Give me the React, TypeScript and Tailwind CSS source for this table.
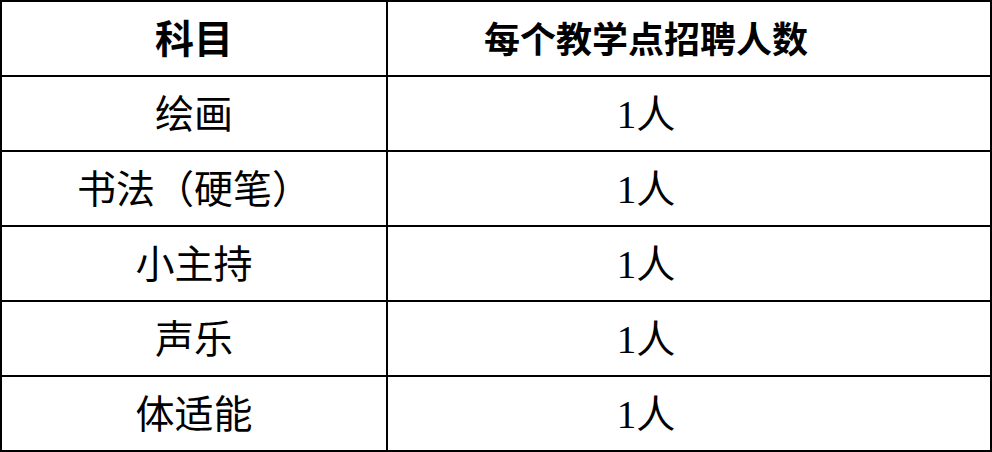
import React from "react"

const rows = ["绘画", "书法（硬笔）", "小主持", "声乐", "体适能"]

const font = { fontFamily: '"Liberation Serif", "Noto Sans CJK SC", serif' }

export default function App() {
  return (
    <div className="w-[992px] h-[452px] bg-white text-black" style={font}>
      <table className="w-[992px] table-fixed border-collapse border-2 border-black">
        <colgroup>
          <col className="w-[386px]" />
          <col />
        </colgroup>
        <thead>
          <tr className="h-[75px]">
            <th className="border-2 border-black text-[39px] font-bold pt-1">科目</th>
            <th className="border-2 border-black text-[36px] font-bold pt-1 pr-[86px]">每个教学点招聘人数</th>
          </tr>
        </thead>
        <tbody>
          {rows.map((r) => (
            <tr key={r} className="h-[75px]">
              <td className="border-2 border-black text-center text-[39px] pt-1">{r}</td>
              <td className="border-2 border-black text-center text-[39px] pt-1 pr-[86px]">1人</td>
            </tr>
          ))}
        </tbody>
      </table>
    </div>
  )
}
